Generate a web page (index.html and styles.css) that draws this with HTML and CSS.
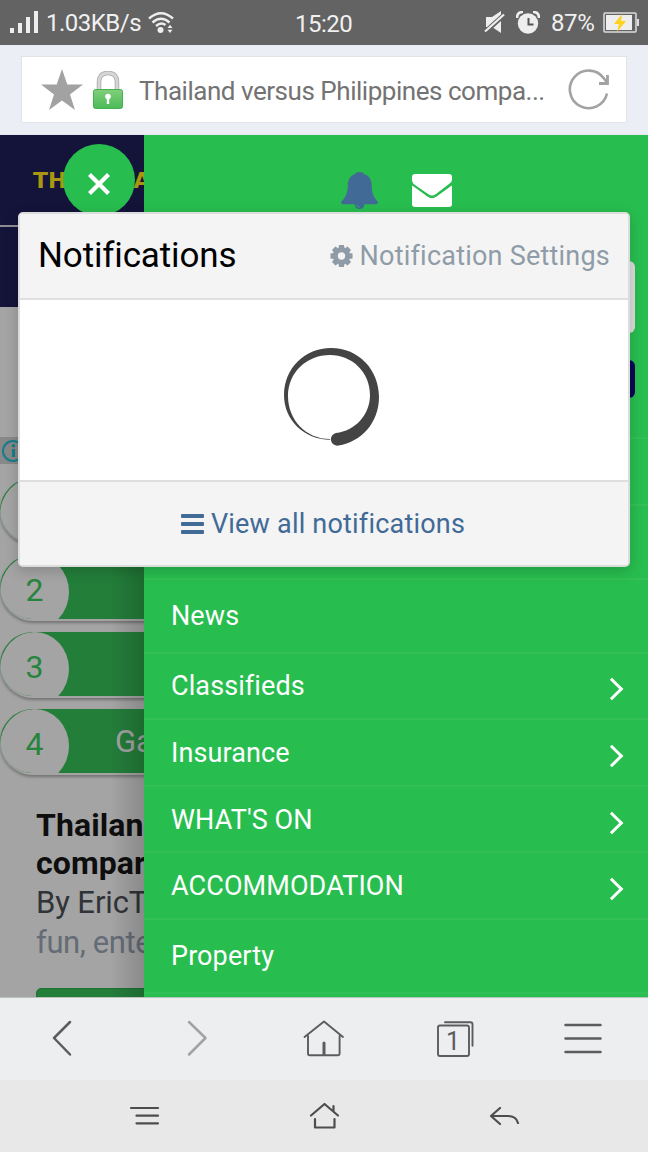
FILE: index.html
```html
<!DOCTYPE html>
<html lang="en">
<head>
<meta charset="utf-8">
<title>Thailand versus Philippines</title>
<link rel="stylesheet" href="styles.css">
</head>
<body>
<div class="phone">
  <header class="status">
    <svg class="signal" width="28" height="24" viewBox="0 0 28 24" fill="#eee"><path d="M0 17h4v5H0zM8 12h4v10H8zM16 6h4v16h-4zM24 0h4v22h-4z"/></svg>
    <span class="speed">1.03KB/s</span>
    <svg class="wifi" width="26" height="22" viewBox="0 0 26 22" fill="none" stroke="#eee" stroke-width="2.400"><path d="M1 6.500Q13-4 25 6.500M4.500 10.500Q13 3 21.500 10.500M8 14Q13 9.500 17.500 13"/><circle cx="12.500" cy="18" r="3" fill="#eee" stroke="none"/><path d="M19.500 16l2.500-3.200 2.500 3.200zM19.500 17.800l2.500 3.200 2.500-3.200z" fill="#eee" stroke="none"/></svg>
    <span class="clock">15:20</span>
    <svg class="mute" width="22" height="24" viewBox="0 0 22 24"><path d="M2 6h6l9-6v22l-9-6H2z" fill="#eee"/><path d="M0 22L20 4" stroke="#636363" stroke-width="5"/><path d="M1 20.500L20 3.500" stroke="#eee" stroke-width="2.200"/></svg>
    <svg class="alarm" width="24" height="23" viewBox="0 0 24 23"><circle cx="12" cy="12.500" r="10.200" fill="#eee"/><path d="M1 7Q1 1 7 1M17 1q6 0 6 6" fill="none" stroke="#eee" stroke-width="2.600"/><path d="M12.500 7v6.500h5" fill="none" stroke="#555" stroke-width="2"/></svg>
    <span class="percent">87%</span>
    <svg class="battery" width="36" height="22" viewBox="0 0 36 22"><rect x="1" y="1" width="32" height="19" rx="1" fill="none" stroke="#ddd" stroke-width="1.500"/><path d="M3 3h26v15H3z" fill="#eee"/><path d="M34 7h2v7h-2z" fill="#ddd"/><path d="M19 2l-8 10h5l-2 8 9-11h-5z" fill="#ffd21c"/></svg>
  </header>

  <div class="browser">
    <div class="address">
      <svg class="star" width="42" height="42" viewBox="0 0 42 42"><path d="M21 0l5.300 15.500H42L29 25.500 34 41 21 31.500 8 41l5-15.500L0 15.500h15.700z" fill="#a2a2a2"/></svg>
      <svg class="lock" width="30" height="38" viewBox="0 0 30 38"><defs><linearGradient id="g" x2="0" y2="1"><stop stop-color="#81cf7a"/><stop offset="1" stop-color="#4abb58"/></linearGradient></defs><path d="M6 19V11Q6 2 15 2t9 9v8" fill="none" stroke="#aaa" stroke-width="4.500"/><path d="M6 19V11Q6 2 15 2t9 9v8" fill="none" stroke="#d6d6d6" stroke-width="2.800"/><rect x=".5" y="18.500" width="29" height="19" rx="2" fill="url(#g)" stroke="#48af50"/><circle cx="15" cy="25.500" r="2.800" fill="#fff"/><path d="M13.800 26h2.400v7h-2.400z" fill="#fff"/></svg>
      <span class="url">Thailand versus Philippines compa...</span>
      <svg class="reload" width="42" height="42" viewBox="0 0 42 42" fill="none" stroke="#a2a2a2" stroke-width="2.600"><path d="M39 24.500A18.800 18.800 0 1 1 36 9.500L39 13.500"/><path d="M39.500 6v8.500h-8.500" stroke-width="2.800"/></svg>
    </div>
  </div>

  <main class="view">
    <section class="page">
      <div class="masthead"><div class="brand"><b>TH</b><b>A</b></div></div>
      <div class="adspace"><div class="adbar"><svg width="24" height="24" viewBox="0 0 24 24"><circle cx="12" cy="12" r="10" fill="none" stroke="#167c8c" stroke-width="2"/><path d="M11 10h3v8h-3z" fill="#167c8c"/><circle cx="12.500" cy="6.800" r="1.800" fill="#167c8c"/></svg></div></div>
      <div class="pills">
        <div class="pill"><span class="num"></span></div>
        <div class="pill"><span class="num">2</span></div>
        <div class="pill"><span class="num">3</span></div>
        <div class="pill"><span class="num">4</span><span class="pill-text">Ga</span></div>
      </div>
      <div class="article">
        <h1>Thailan<br>compar</h1>
        <p class="author">By EricT</p>
        <p class="tags">fun, ente</p>
        <div class="button"></div>
      </div>
    </section>

    <aside class="drawer">
      <div class="drawer-head">
        <svg class="bell" width="37" height="39" viewBox="0 0 38 40"><path d="M19 1c3 0 4 1 4.500 2 6 2 8 6 8 12 0 9 3 13 6.500 16.500 0 2-1 2.500-2.500 2.500H24c0 3-2 5-5 5s-5-2-5-5H2.500C1 34 0 33.500 0 31.500 4 28 7 23 7 15 7 9 9 5 14.500 3 15 2 16 1 19 1z" fill="#416a97"/><path d="M16 34.500q.500 2.500 3 2.700" fill="none" stroke="#28bd4f" stroke-width=".9"/></svg>
        <svg class="mail" width="40" height="33" viewBox="0 0 40 33" fill="#fff"><path d="M3 0h34q3 0 3 3v3q0 2-3 4L24 20q-4 3-8 0L3 11Q0 9 0 6V3q0-3 3-3z"/><path d="M0 10.500L16 22q4 3 8 0l16-11.500V30q0 3-3 3H3q-3 0-3-3z" stroke="#28bd4f" stroke-width="1.600"/><path d="M0 11.500V30q0 3 3 3h34q3 0 3-3V11.500L25 22.500q-5 3.500-10 0z"/></svg>
      </div>
      <div class="field"></div>
      <div class="submit"></div>
      <nav class="menu">
        <div class="item"></div>
        <div class="item tall"></div>
        <div class="item tall">News</div>
        <div class="item">Classifieds<i class="chev"></i></div>
        <div class="item">Insurance<i class="chev"></i></div>
        <div class="item">WHAT'S ON<i class="chev"></i></div>
        <div class="item">ACCOMMODATION<i class="chev"></i></div>
        <div class="item tall">Property</div>
        <div class="item"></div>
      </nav>
    </aside>

    <div class="close"><svg width="24" height="24" viewBox="0 0 24 24"><path d="M2.500 2.500l19 19M21.500 2.500l-19 19" stroke="#fff" stroke-width="4.200"/></svg></div>

    <section class="popup">
      <div class="popup-head">
        <h2>Notifications</h2>
        <a class="settings"><svg width="23" height="24" viewBox="-12 -12 24 24"><g fill="#8f9ca7"><path id="t" d="M-2.500-11.500h5l1 5h-7zM-2.500 11.500h5l1-5h-7z"/><use href="#t" transform="rotate(45)"/><use href="#t" transform="rotate(90)"/><use href="#t" transform="rotate(135)"/></g><circle r="6.300" fill="none" stroke="#8f9ca7" stroke-width="5"/></svg><span>Notification Settings</span></a>
      </div>
      <div class="popup-body"><svg class="spinner" width="96" height="98" viewBox="0 0 96 98"><path fill="#444" fill-rule="evenodd" d="M46 91.700C20 91.500 0 72 0 47 0 20 21 0 47 0 75 0 95 22 95 49c0 26-18 45-40.500 48.500A6.300 6.300 0 0 1 52 85C71 83 86 67 86 47 86 24 68 7 46 7 22 7 4 25 4 48c0 24 18 43 42 43z"/></svg></div>
      <div class="popup-foot"><svg width="23" height="20" viewBox="0 0 23 20" fill="#416a97"><rect width="23" height="4" rx="1"/><rect y="8" width="23" height="4" rx="1"/><rect y="16" width="23" height="4" rx="1"/></svg><span>View all notifications</span></div>
    </section>
  </main>

  <nav class="toolbar">
    <svg viewBox="0 0 648 82" width="648" height="82" fill="none" stroke="#5c5c5e" stroke-width="2.500" stroke-linecap="round" stroke-linejoin="round">
      <path d="M70 24L54 40 70 56.500"/><path d="M189 24l16.500 16L189 56.500" stroke="#a2a2a4"/>
      <g stroke-width="1.900"><path d="M304.500 39L324 23.500l19 15.500M308 38v17.500q0 1.800 1.800 1.800h28q1.800 0 1.800-1.800V38"/><path d="M324 45v11" stroke-width="3"/>
      <rect x="438" y="27.500" width="31" height="30.500" rx="2"/><path d="M445 24.200h25.500q2 0 2 2v21.500"/></g>
      <path d="M565.500 27h35M565.500 40.500h35M565.500 54h35"/>
      <text class="tab-count" x="453" y="52" text-anchor="middle">1</text>
    </svg>
  </nav>
  <footer class="system">
    <svg viewBox="0 0 648 72" width="648" height="72" fill="none" stroke="#4d4d4d" stroke-width="2.200" stroke-linecap="round" stroke-linejoin="round">
      <path d="M131 28h27M136.500 35.700H158M136.500 43.300H158"/>
      <path d="M311 35.500L324.500 24 338 35.500M315 39v8.500h19.500V39M333.500 26v5"/>
      <path d="M500 28l-9 8 9 8M492 36h16c6 0 9 3 10 7"/>
    </svg>
  </footer>
</div>
</body>
</html>
```
FILE: styles.css
```css
* { box-sizing: border-box; }
body { margin: 0; font-family: Roboto, "Liberation Sans", sans-serif; }
h1, h2, p { margin: 0; font-weight: 400; }
svg { display: block; flex: none; }
.phone { width: 648px; height: 1152px; display: flex; flex-direction: column; overflow: hidden; }

.status { height: 45px; background: #636363; color: #f0f0f0; display: flex; align-items: center; padding: 0 9px 0 10px; font-size: 24px; white-space: nowrap; }
.speed { margin-left: 8px; width: 96px; letter-spacing: -.5px; }
.wifi { margin-left: 6px; }
.clock { margin-left: 121px; width: 58px; letter-spacing: -.5px; padding-top: 2px; }
.mute { margin-left: auto; }
.alarm { margin-left: 10px; }
.percent { margin-left: 11px; width: 43px; letter-spacing: -.4px; }
.battery { margin-left: 9px; }

.browser { height: 90px; padding: 11px 21px 12px; background: #ebeef5; border-bottom: 1px solid #e4e7ed; }
.address { height: 67px; background: #fff; border: 1px solid #e2e3e7; display: flex; align-items: center; padding: 0 16px 0 19px; color: #737373; font-size: 26px; }
.lock { margin-left: 10px; }
.url { margin-left: 16px; padding-top: 2px; white-space: nowrap; letter-spacing: -.47px; }
.reload { margin-left: auto; }

.view { position: relative; height: 862px; display: flex; overflow: hidden; }
.page { position: relative; width: 144px; flex: none; overflow: hidden; background: #a4a4a4; }
.page::after { content: ""; position: absolute; top: 172px; bottom: 0; right: 0; width: 34px; background: linear-gradient(to right, rgba(0,0,0,0), rgba(0,0,0,.16)); }
.masthead { height: 172px; background: #14133a; }
.brand { height: 92px; border-bottom: 2px solid #8d8d94; padding: 33px 0 0 33px; display: flex; gap: 67px; color: #a8970f; font: 700 22px/26px "DejaVu Sans", sans-serif; }
.adspace { height: 171px; padding-top: 130px; }
.adbar { height: 27px; background: #888; padding: 2px 1px; }
.pills { display: flex; flex-direction: column; gap: 11px; }
.pill { width: 300px; height: 66px; flex: none; border-radius: 33px; background: #237e3a; border-bottom: 2px solid #a4a4a4; box-shadow: 0 2px 3px rgba(0,0,0,.3); display: flex; overflow: hidden; }
.num { width: 69px; height: 74px; flex: none; border-radius: 50%; background: #a4a4a4; color: #27843d; display: flex; align-items: center; justify-content: center; padding-bottom: 5px; font-size: 32px; }
.pill-text { margin-left: 46px; font-size: 31px; line-height: 66px; color: #a4a4a4; }
.article { padding: 31px 0 0 36px; white-space: nowrap; }
.article h1 { font-size: 32px; font-weight: 700; line-height: 38px; letter-spacing: .1px; color: #0e0e0e; }
.author { font-size: 31px; line-height: 40px; color: #303338; margin-top: 1px; letter-spacing: -.1px; }
.tags { font-size: 31px; line-height: 40px; color: #646c76; letter-spacing: -.4px; }
.button { margin-top: 25px; height: 60px; width: 260px; background: #237e3a; border: 1px solid #1f7133; border-radius: 5px; }

.drawer { width: 504px; background: #28bd4f; color: #fff; }
.drawer-head { height: 126px; padding: 36px 0 0 197px; display: flex; gap: 34px; }
.mail { margin-top: 3px; }
.field { margin: 0 13px 0 27px; height: 72px; background: #dcdcdc; border-radius: 6px; }
.submit { margin: 27px 13px 0 27px; height: 38px; background: #080855; border-radius: 6px; }
.menu { margin-top: 39px; }
.item { height: 66.600px; border-top: 2px solid #32c056; padding: 1px 24px 0 27px; display: flex; align-items: center; justify-content: space-between; font-size: 27px; letter-spacing: .1px; }
.tall { height: 74px; }
.chev { width: 16px; height: 16px; border: solid #fff; border-width: 3px 3px 0 0; transform: translate(-4px, 3px) rotate(45deg); }

.close { position: absolute; left: 63px; top: 9px; width: 72px; height: 72px; border-radius: 50%; background: #28bd4f; display: flex; align-items: center; justify-content: center; padding-top: 8px; }
.popup { position: absolute; left: 18px; top: 77px; width: 612px; height: 355px; border: 2px solid #dbdddc; border-radius: 5px; background: #fff; box-shadow: 0 4px 14px rgba(0,0,0,.18); overflow: hidden; }
.popup-head { height: 86px; background: #f4f4f4; border-bottom: 2px solid #e0e0e0; display: flex; align-items: center; justify-content: space-between; padding: 0 18px 1px 18px; }
.popup h2 { font-size: 35px; letter-spacing: -.15px; color: #000; }
.settings { display: flex; align-items: center; gap: 7px; color: #8f9ca7; font-size: 27px; letter-spacing: .22px; white-space: nowrap; }
.popup-body { height: 180px; padding: 48px 0 0 264px; }
.popup-foot { height: 85px; border-top: 2px solid #dedede; background: #f4f4f4; display: flex; align-items: center; justify-content: center; gap: 7px; padding: 0 2px 0 0; color: #416a97; font-size: 27px; letter-spacing: .2px; }

.toolbar { height: 83px; background: #edeef0; border-top: 1px solid #b8c4ba; }
.system { height: 72px; background: #e8e8e8; }
.tab-count { font-size: 25px; fill: #5c5c5e; stroke: none; }
```
